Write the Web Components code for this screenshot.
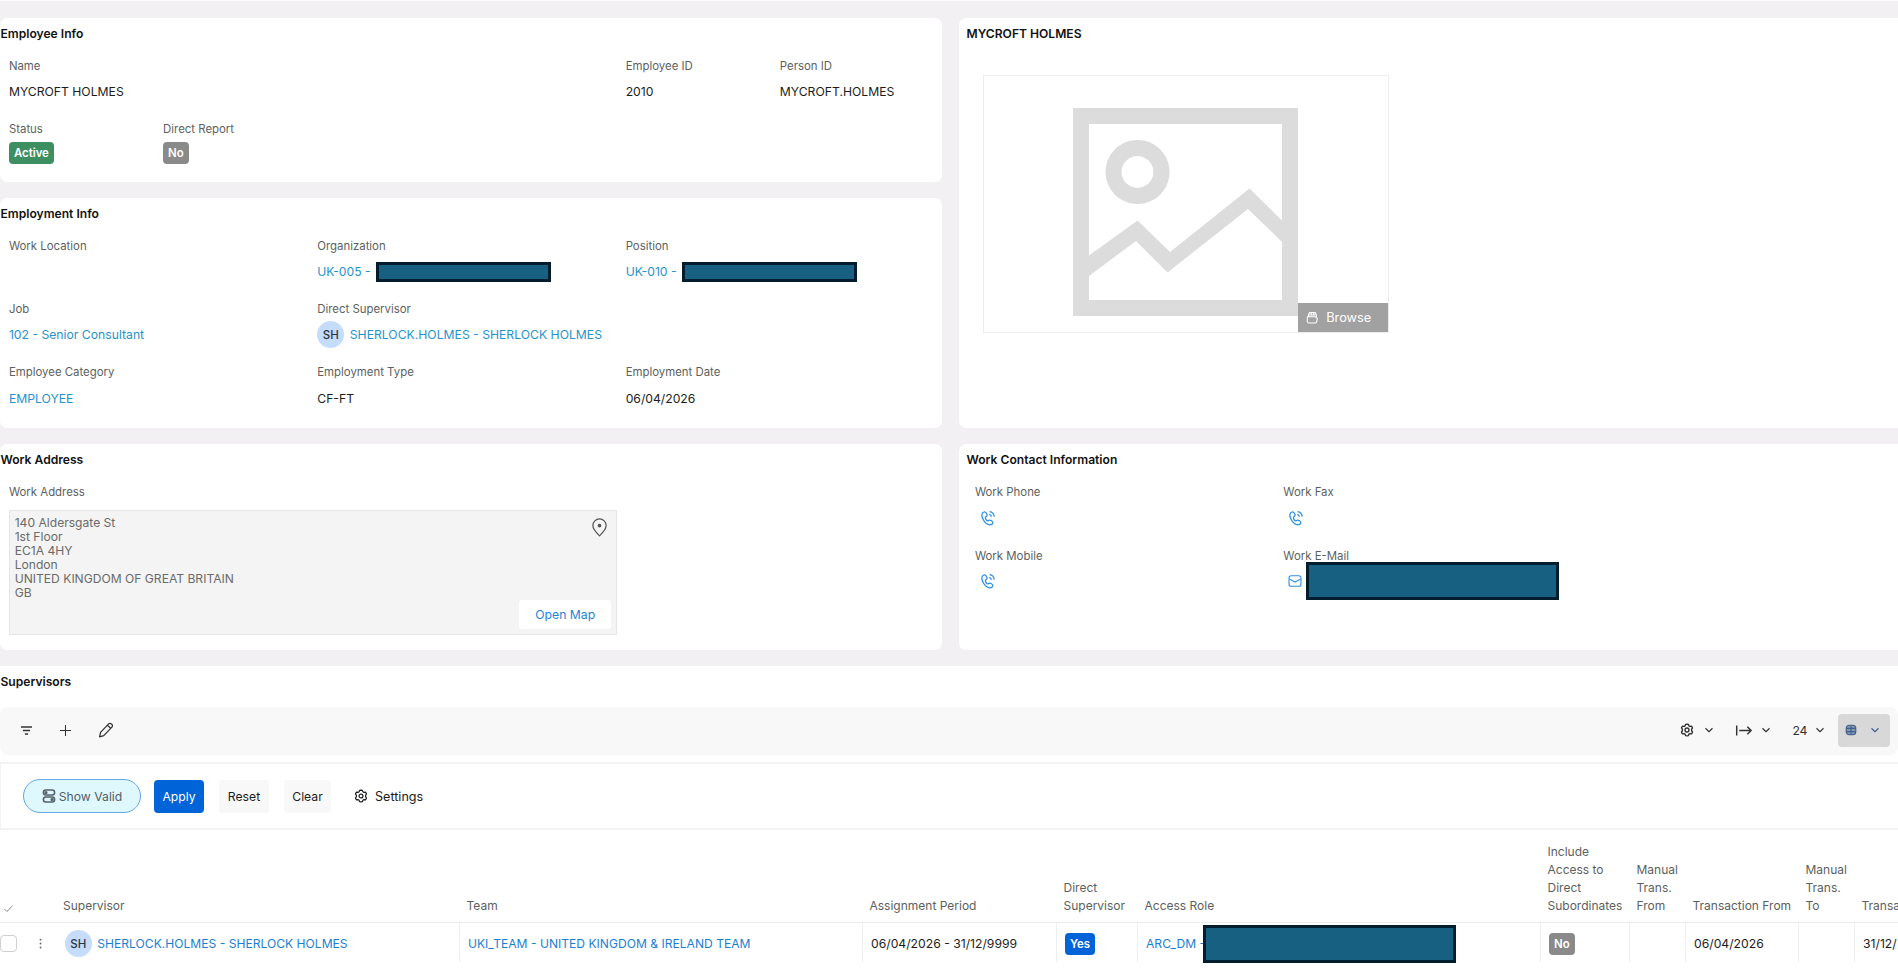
<!DOCTYPE html>
<html lang="en">
<head>
<meta charset="utf-8">
<title>Employee</title>
<style>
    body {
        margin: 0;
        height: 977px;
        overflow: hidden;
        background: #f2f0f3;
        font-family: Inter, "Liberation Sans", sans-serif;
        font-size: 12.2px;
        color: #1c1c1c;
    }
</style>
</head>
<body>
<employee-page></employee-page>

<script>
//#region ICONS

const icons = {
    filter: `<path d="M1.5 4.5h17M4.5 10h11M7.5 15.5h5" stroke-width="2.2"/>`,
    plus: `<path d="M10 1.5v17M1.5 10h17"/>`,
    pencil: `<path d="M2 18.5l1.2-5.5L13.3 2.3a2.3 2.3 0 0 1 3.3 0l.8.8a2.3 2.3 0 0 1 0 3.3L7.2 17zM12 4l3.8 3.8"/>`,
    gear: `<path d="M10 1.6l2 .4.7 2 1.6.9 2.1-.4 1.5 2.5-1.3 1.9v2.2l1.3 1.9-1.5 2.5-2.1-.4-1.6.9-.7 2-2 .4-2-.4-.7-2-1.6-.9-2.1.4-1.5-2.5 1.3-1.9V8.9L2.1 7l1.5-2.5 2.1.4 1.6-.9.7-2z"/><circle cx="10" cy="10" r="2.8"/>`,
    chevron: `<path d="M3 6.5l7 7 7-7"/>`,
    arrow: `<path d="M2 4v12M5 10h14M14.5 5.5L19 10l-4.5 4.5"/>`,
    table: `<rect x="2" y="2" width="16" height="16" rx="5" fill="#8497b2"/><path d="M10 2v16M2 7.3h16M2 12.7h16"/>`,
    toggles: `<rect x="2" y="1.5" width="16" height="7" rx="3.5"/><rect x="2" y="11.5" width="16" height="7" rx="3.5"/><circle cx="5.7" cy="5" r="1.2"/><circle cx="14.3" cy="15" r="1.2"/>`,
    phone: `<path d="M5 2.5C2 3.5 1.5 7 3.5 11c2.2 4.5 5.8 7.5 9 7.5 2.2 0 3.8-1.5 3.5-3.2-.2-1.3-3-3-4.3-2.7-1 .2-1.2 1.3-2.2 1.1C8 13.3 6.5 10.5 6.8 9.2c.2-1 1.7-1 2-2.2C9.1 5.5 7.5 1.8 5 2.5zM11.5 5.5c1.4.3 2.5 1.5 2.7 3M12 2c3 .4 5.5 3 5.8 6.3"/>`,
    mail: `<rect x="1.5" y="2.5" width="17" height="15" rx="3"/><path d="M2.5 7.5l7.5 4 7.5-4"/>`,
    pin: `<path d="M10 18.8C6 15 3 11.6 3 8a7 7 0 0 1 14 0c0 3.6-3 7-7 10.8z"/><circle cx="10" cy="8" r="1.3" fill="currentColor"/>`,
    browse: `<path d="M2 9h12.5l3 2.5-1.2 5.5-1.8 1.5h-11L2 16.5zM3.8 9V5.5l1.7-3h9l1.5 3.5v4M4 6h11M8 2.5v3M12 2.5v3"/>`,
    check: `<path d="M2.5 11l4.5 4.5L17.5 5"/>`,
    dots: `<path d="M10 4v.1M10 10v.1M10 16v.1" stroke-width="2.8" stroke-linecap="round"/>`
}

//#endregion ICONS

class HrIcon extends HTMLElement {
    constructor() {
        super()
        this.attachShadow({ mode: "open" })
    }

    connectedCallback() {
        const size = this.getAttribute("size") || 14
        const stroke = this.getAttribute("stroke") || 1.6
        this.shadowRoot.innerHTML = /*html*/`
            <style>
                :host { display: inline-flex; flex: none; }
                svg { display: block; }
            </style>
            <svg width="${size}" height="${size}" viewBox="0 0 20 20" fill="none" stroke="currentColor" stroke-width="${stroke}" stroke-linejoin="round">${icons[this.getAttribute("name")]}</svg>
        `
    }
}
customElements.define("hr-icon", HrIcon)

// registers an element whose shadow root is a clone of the given markup
function define(name, html) {
    const template = document.createElement("template")
    template.innerHTML = html
    customElements.define(name, class extends HTMLElement {
        constructor() {
            super()
            this.attachShadow({ mode: "open" }).append(template.content.cloneNode(true))
        }
    })
}

//#region BASIC ELEMENTS

define("hr-card", /*html*/`
    <style>
        :host {
            display: block;
            box-sizing: border-box;
            background: #fff;
            border-radius: 7px;
            padding-left: var(--card-pad, 0);
        }
        .title {
            font-weight: 600;
            font-size: 12.1px;
            line-height: 32px;
            height: 37.5px;
            padding-left: 0.5px;
            color: #111;
            white-space: nowrap;
        }
    </style>
    <div class="title"><slot name="title"></slot></div>
    <slot></slot>
`)

define("hr-fields", /*html*/`
    <style>
        :host {
            display: grid;
            grid-template-columns: repeat(6, 154.2px);
            grid-auto-rows: 63.3px;
            padding-left: 8.9px;
        }
    </style>
    <slot></slot>
`)

define("hr-field", /*html*/`
    <style>
        :host { display: block; grid-column: span 2; white-space: nowrap; }
        :host([narrow]) { grid-column: span 1; }
        :host([wide]) { grid-column: span 4; }
        .label { font-size: 11.4px; line-height: 20px; color: #5c5f61; }
        .value { display: flex; align-items: center; height: 31.5px; }
        :host([tag]) .value { height: 29px; }
    </style>
    <div class="label"><slot name="label"></slot></div>
    <div class="value"><slot></slot></div>
`)

define("hr-link", /*html*/`
    <style>
        :host { display: block; color: var(--link, #1f93cb); white-space: nowrap; }
    </style>
    <slot></slot>
`)

define("hr-tag", /*html*/`
    <style>
        :host {
            display: inline-block;
            box-sizing: border-box;
            height: 22px;
            line-height: 22px;
            padding: 0 5px;
            border-radius: 4px;
            background: #8a8a8a;
            color: #fff;
            font-size: 11.4px;
            font-weight: 600;
        }
        :host([kind="green"]) { background: #3d8f62; }
        :host([kind="blue"]) { background: #0064d9; }
    </style>
    <slot></slot>
`)

define("hr-avatar", /*html*/`
    <style>
        :host {
            display: inline-flex;
            flex: none;
            align-items: center;
            justify-content: center;
            width: 27px;
            height: 27px;
            border-radius: 50%;
            background: #c5dcfb;
            color: #2d3540;
            font-size: 11.5px;
            font-weight: 500;
            margin-right: 5.5px;
        }
    </style>
    <slot></slot>
`)

// solid bar that covers a private value
define("hr-mask", /*html*/`
    <style>
        :host {
            display: block;
            flex: none;
            box-sizing: border-box;
            width: 175px;
            height: 20px;
            border: 3px solid #021e2e;
            background: #176082;
        }
        :host([large]) { width: 253px; height: 38px; }
    </style>
`)

define("hr-button", /*html*/`
    <style>
        :host {
            display: inline-flex;
            box-sizing: border-box;
            align-items: center;
            justify-content: center;
            height: 33px;
            border-radius: 4px;
            background: #f8f8f8;
            color: #1c1c1c;
            font-size: 12.2px;
        }
        :host([primary]) { background: #0064d9; color: #fff; }
        :host([pill]) {
            height: 34px;
            border: 1px solid #64a6e6;
            border-radius: 17px;
            background: #dff8fd;
            color: #54606a;
            gap: 3px;
        }
        :host([plain]) { background: none; gap: 7px; font-size: 12.6px; }
    </style>
    <slot></slot>
`)

//#endregion BASIC ELEMENTS

define("hr-photo", /*html*/`
    <style>
        :host {
            display: flex;
            position: relative;
            box-sizing: border-box;
            width: 405.5px;
            height: 257.5px;
            margin: 19.5px 0 0 17.2px;
            border: 1px solid #ededed;
            padding: 31.5px 0 0 89px;
        }
        .browse {
            position: absolute;
            right: 0;
            bottom: 0;
            display: flex;
            align-items: center;
            gap: 7px;
            box-sizing: border-box;
            width: 89.5px;
            height: 28.5px;
            padding-left: 8px;
            background: #a1a1a1;
            color: #fff;
            font-size: 12.8px;
        }
    </style>
    <svg width="225" height="208" viewBox="0 0 225 208" fill="#dcdcdc">
        <path fill-rule="evenodd" d="M0 0h225v208H0zM16 16v176h193V16z"/>
        <path fill-rule="evenodd" d="M64.5 32a32 32 0 1 0 .1 0zM64.5 48a16 16 0 1 1-.1 0z"/>
        <path d="M16 147.5L64.5 112.5 97 144 176.5 80.5 209 112.5V134L175 101 94.5 164.5 63 133 16 168z"/>
    </svg>
    <div class="browse"><hr-icon name="browse" size="13"></hr-icon>Browse</div>
`)

define("address-box", /*html*/`
    <style>
        :host {
            display: flex;
            justify-content: space-between;
            box-sizing: border-box;
            width: 608.5px;
            height: 125.5px;
            margin: -35.5px 0 0 8.7px;
            border: 1px solid #e6e6e6;
            background: #f4f4f4;
            padding: 5px;
            color: #6a6a6a;
            line-height: 14.1px;
        }
        .lines { font-size: 12.1px; }
        .side { display: flex; flex-direction: column; justify-content: space-between; align-items: flex-end; }
        hr-icon { margin: 2px 2px 0 0; color: #555; }
        .map {
            width: 92px;
            height: 29px;
            line-height: 29px;
            border-radius: 3px;
            background: #fff;
            color: #1a84d8;
            text-align: center;
            font-size: 12.2px;
        }
    </style>
    <div class="lines"><slot></slot></div>
    <div class="side">
        <hr-icon name="pin" size="19" stroke="1.3"></hr-icon>
        <div class="map">Open Map</div>
    </div>
`)

define("list-toolbar", /*html*/`
    <style>
        :host {
            display: flex;
            align-items: center;
            box-sizing: border-box;
            height: 48px;
            margin-top: 3.5px;
            padding: 0 8px 2px 20px;
            border-radius: 8px;
            background: #f8f8f8;
            color: #333;
        }
        .left { display: flex; gap: 26px; flex: 1; align-items: center; }
        .menu { display: flex; align-items: center; }
        .view {
            display: flex;
            align-items: center;
            justify-content: center;
            gap: 13px;
            box-sizing: border-box;
            width: 52px;
            height: 33px;
            margin-left: 13px;
            padding-right: 3px;
            border-radius: 4px;
            background: #d8d8d8;
            color: #3f5f8c;
        }
    </style>
    <div class="left">
        <hr-icon name="filter" size="13"></hr-icon>
        <hr-icon name="plus" size="13"></hr-icon>
        <hr-icon name="pencil" size="16" stroke="1.6"></hr-icon>
    </div>
    <div class="menu" style="gap:10px"><hr-icon name="gear" size="14" stroke="2"></hr-icon><hr-icon name="chevron" size="10" stroke="2.2"></hr-icon></div>
    <div class="menu" style="gap:9px; margin-left:21px"><hr-icon name="arrow" size="17" stroke="1.7"></hr-icon><hr-icon name="chevron" size="10" stroke="2.2"></hr-icon></div>
    <div class="menu" style="gap:7.5px; margin-left:21.5px"><span>24</span><hr-icon name="chevron" size="10" stroke="2.2"></hr-icon></div>
    <div class="view"><hr-icon name="table" size="12" stroke="1.8"></hr-icon><hr-icon name="chevron" size="10" stroke="2.2"></hr-icon></div>
`)

define("list-search", /*html*/`
    <style>
        :host {
            display: flex;
            align-items: center;
            box-sizing: border-box;
            height: 68px;
            margin-top: 7px;
            padding-left: 22px;
            border: solid #f3f3f3;
            border-width: 2px 0 2px 1px;
        }
    </style>
    <hr-button pill style="width:118px"><hr-icon name="toggles" size="14" stroke="2.2"></hr-icon>Show Valid</hr-button>
    <hr-button primary style="width:50px; margin-left:13px">Apply</hr-button>
    <hr-button style="width:50px; margin-left:15px">Reset</hr-button>
    <hr-button style="width:47px; margin-left:15px">Clear</hr-button>
    <hr-button plain style="margin-left:23px"><hr-icon name="gear" size="14" stroke="1.7"></hr-icon>Settings</hr-button>
`)

define("supervisor-table", /*html*/`
    <style>
        :host {
            display: grid;
            grid-template-columns: 460px 403px 194px 81px 403px 89px 56px 113px 56px 140px;
            grid-template-rows: 93px 38.5px;
            --link: #1a7fd0;
        }
        .head {
            display: flex;
            align-items: flex-end;
            box-sizing: border-box;
            padding: 0 0 7px 6.5px;
            border-bottom: 1px solid #ececec;
            line-height: 18.2px;
            font-size: 12px;
            color: #5c5f61;
        }
        .cell {
            display: flex;
            align-items: center;
            box-sizing: border-box;
            padding: 2px 0 0 8px;
            border-right: 1px solid #efefef;
            white-space: nowrap;
        }
        .first { padding-left: 0; }
        .first.head hr-icon { margin: 0 49px 1px 3px; color: #777; }
        .box { width: 15px; height: 15px; border: 1px solid #cfcfcf; border-radius: 4px; }
        .cell hr-icon { margin: 0 17.8px 0 17px; color: #666; }
        .first hr-link, .cell hr-link { font-size: 12.1px; }
        hr-mask { margin-left: -2px; }
    </style>
    <div class="head first"><hr-icon name="check" size="11"></hr-icon>Supervisor</div>
    <div class="head">Team</div>
    <div class="head">Assignment Period</div>
    <div class="head">Direct<br>Supervisor</div>
    <div class="head">Access Role</div>
    <div class="head">Include<br>Access to<br>Direct<br>Subordinates</div>
    <div class="head">Manual<br>Trans.<br>From</div>
    <div class="head">Transaction From</div>
    <div class="head">Manual<br>Trans.<br>To</div>
    <div class="head">Transa</div>
    <div class="cell first"><span class="box"></span><hr-icon name="dots" size="13"></hr-icon><hr-avatar>SH</hr-avatar><hr-link>SHERLOCK.HOLMES - SHERLOCK HOLMES</hr-link></div>
    <div class="cell"><hr-link>UKI_TEAM - UNITED KINGDOM &amp; IRELAND TEAM</hr-link></div>
    <div class="cell">06/04/2026 - 31/12/9999</div>
    <div class="cell"><hr-tag kind="blue">Yes</hr-tag></div>
    <div class="cell"><hr-link>ARC_DM -</hr-link><hr-mask large></hr-mask></div>
    <div class="cell"><hr-tag>No</hr-tag></div>
    <div class="cell"></div>
    <div class="cell">06/04/2026</div>
    <div class="cell"></div>
    <div class="cell">31/12/</div>
`)

define("employee-page", /*html*/`
    <style>
        :host { display: block; border-top: 1px solid #fafafa; padding-top: 17px; }
        .cards {
            display: grid;
            grid-template-columns: 942px 947px;
            grid-template-rows: 164.4px 230px 206px;
            gap: 16px 17px;
        }
        .photo { grid-row: span 2; }
        .right { --card-pad: 7px; }
        .list { margin-top: 16px; height: 320px; width: 1898px; border-radius: 0; overflow: hidden; }
        .icon { color: #2f8fe0; margin-left: 5px; }
    </style>
    <div class="cards">
        <hr-card>
            <span slot="title">Employee Info</span>
            <hr-fields>
                <hr-field wide><span slot="label">Name</span>MYCROFT HOLMES</hr-field>
                <hr-field narrow><span slot="label">Employee ID</span>2010</hr-field>
                <hr-field narrow><span slot="label">Person ID</span>MYCROFT.HOLMES</hr-field>
                <hr-field narrow tag><span slot="label">Status</span><hr-tag kind="green">Active</hr-tag></hr-field>
                <hr-field narrow tag><span slot="label">Direct Report</span><hr-tag>No</hr-tag></hr-field>
            </hr-fields>
        </hr-card>
        <hr-card class="photo right">
            <span slot="title">MYCROFT HOLMES</span>
            <hr-photo></hr-photo>
        </hr-card>
        <hr-card>
            <span slot="title">Employment Info</span>
            <hr-fields>
                <hr-field><span slot="label">Work Location</span></hr-field>
                <hr-field><span slot="label">Organization</span><hr-link>UK-005 -</hr-link><hr-mask style="margin-left:5px"></hr-mask></hr-field>
                <hr-field><span slot="label">Position</span><hr-link>UK-010 -</hr-link><hr-mask style="margin-left:5px"></hr-mask></hr-field>
                <hr-field><span slot="label">Job</span><hr-link>102 - Senior Consultant</hr-link></hr-field>
                <hr-field wide><span slot="label">Direct Supervisor</span><hr-avatar>SH</hr-avatar><hr-link>SHERLOCK.HOLMES - SHERLOCK HOLMES</hr-link></hr-field>
                <hr-field><span slot="label">Employee Category</span><hr-link>EMPLOYEE</hr-link></hr-field>
                <hr-field><span slot="label">Employment Type</span>CF-FT</hr-field>
                <hr-field><span slot="label">Employment Date</span>06/04/2026</hr-field>
            </hr-fields>
        </hr-card>
        <hr-card>
            <span slot="title">Work Address</span>
            <hr-fields>
                <hr-field><span slot="label">Work Address</span></hr-field>
            </hr-fields>
            <address-box>140 Aldersgate St<br>1st Floor<br>EC1A 4HY<br>London<br>UNITED KINGDOM OF GREAT BRITAIN<br>GB</address-box>
        </hr-card>
        <hr-card class="right">
            <span slot="title">Work Contact Information</span>
            <hr-fields style="grid-auto-rows:63.8px">
                <hr-field><span slot="label">Work Phone</span><hr-icon class="icon" name="phone" size="16"></hr-icon></hr-field>
                <hr-field wide><span slot="label">Work Fax</span><hr-icon class="icon" name="phone" size="16"></hr-icon></hr-field>
                <hr-field><span slot="label">Work Mobile</span><hr-icon class="icon" name="phone" size="16"></hr-icon></hr-field>
                <hr-field wide><span slot="label">Work E-Mail</span><hr-icon class="icon" name="mail" size="14"></hr-icon><hr-mask large style="margin-left:4px"></hr-mask></hr-field>
            </hr-fields>
        </hr-card>
    </div>
    <hr-card class="list">
        <span slot="title">Supervisors</span>
        <list-toolbar></list-toolbar>
        <list-search></list-search>
        <supervisor-table></supervisor-table>
    </hr-card>
`)
</script>
</body>
</html>
